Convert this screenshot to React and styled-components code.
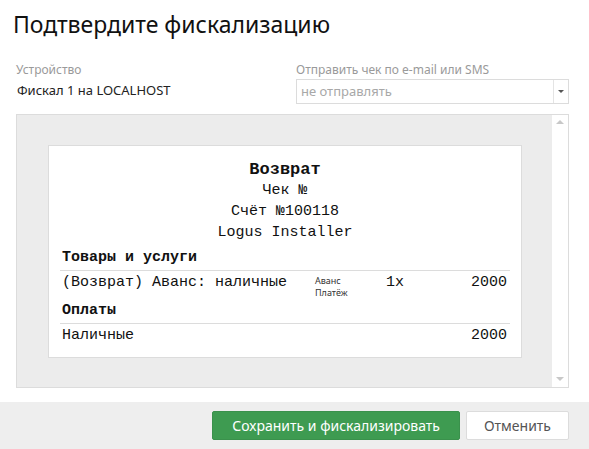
import styled, { createGlobalStyle } from 'styled-components';

const GlobalStyle = createGlobalStyle`
  html, body {
    margin: 0;
    padding: 0;
    background: #fff;
  }
  body {
    font-family: "Noto Sans", "Open Sans", sans-serif;
    color: #222;
  }
`;

const Modal = styled.div`
  width: 589px;
  height: 449px;
  display: flex;
  flex-direction: column;
  background: #fff;
  overflow: hidden;
`;

const Title = styled.h2`
  margin: 0;
  padding: 8px 13px 0;
  font-size: 23px;
  font-weight: 400;
  line-height: 32px;
  color: #111;
`;

const Body = styled.div`
  padding: 0 20px 0 16px;
`;

const Fields = styled.div`
  display: grid;
  grid-template-columns: 1fr 273px;
  margin-top: 22px;
`;

const Field = styled.div`
  display: flex;
  flex-direction: column;
`;

const Label = styled.label`
  font-size: 12px;
  line-height: 16px;
  color: #9a9a9a;
`;

const Value = styled.div`
  font-size: 13px;
  line-height: 18px;
  padding: 3px 0 0 1px;
  color: #222;
`;

const Select = styled.div`
  display: flex;
  height: 23px;
  border: 1px solid #dcdcdc;
  margin-top: 1px;
`;

const SelectText = styled.div`
  flex: 1;
  font-size: 13px;
  line-height: 23px;
  padding-left: 4px;
  color: #a8a8a8;
`;

const SelectArrow = styled.div`
  width: 14px;
  border-left: 1px solid #e4e4e4;
  display: flex;
  align-items: center;
  justify-content: center;
  &::after {
    content: '';
    border-left: 3px solid transparent;
    border-right: 3px solid transparent;
    border-top: 3px solid #555;
  }
`;

const Preview = styled.div`
  margin-top: 10px;
  height: 272px;
  border: 1px solid #dcdcdc;
  background: #ececec;
  display: flex;
`;

const PreviewInner = styled.div`
  flex: 1;
  padding: 30px 30px 30px 31px;
  overflow: hidden;
`;

const Scrollbar = styled.div`
  width: 16px;
  background: #fff;
  display: flex;
  flex-direction: column;
  justify-content: space-between;
  align-items: center;
  padding: 5px 0 6px;
`;

const ScrollArrow = styled.span`
  width: 0;
  height: 0;
  border-left: 4px solid transparent;
  border-right: 4px solid transparent;
  ${(p) =>
    p.$down
      ? 'border-top: 4px solid #c8c8c8;'
      : 'border-bottom: 4px solid #c8c8c8;'}
`;

const Receipt = styled.div`
  background: #fff;
  border: 1px solid #dcdcdc;
  padding: 13px 11px 11px;
  font-family: "Courier New", "Liberation Mono", monospace;
  font-size: 15px;
  line-height: 21px;
  color: #111;
`;

const Center = styled.div`
  text-align: center;
  font-weight: ${(p) => (p.$bold ? 700 : 400)};
  font-size: ${(p) => (p.$bold ? '17px' : '15px')};
`;

const SectionTitle = styled.div`
  font-weight: 700;
  padding: 0 2px 2px;
  border-bottom: 1px solid #dcdcdc;
  margin-top: ${(p) => p.$top || 0}px;
`;

const Row = styled.div`
  display: grid;
  grid-template-columns: 253px 71px 1fr auto;
  padding: 1px 3px 0 2px;
  min-height: ${(p) => (p.$tall ? 27 : 21)}px;
`;

const Tag = styled.div`
  font-family: "Noto Sans", "Open Sans", sans-serif;
  font-size: 9px;
  line-height: 12px;
  color: #333;
  padding-top: 3px;
`;

const Qty = styled.div``;

const Sum = styled.div`
  text-align: right;
`;

const Footer = styled.div`
  margin-top: auto;
  height: 47px;
  background: #eeeeee;
  display: flex;
  align-items: center;
  justify-content: flex-end;
  gap: 6px;
  padding-right: 20px;
`;

const Button = styled.button`
  height: 29px;
  padding: 0 ${(p) => (p.$primary ? 19 : 17)}px;
  border-radius: 2px;
  font-family: "Noto Sans", "Open Sans", sans-serif;
  font-size: 14px;
  border: 1px solid ${(p) => (p.$primary ? '#3a914c' : '#dcdcdc')};
  background: ${(p) => (p.$primary ? '#3e9b51' : '#fff')};
  color: ${(p) => (p.$primary ? '#fff' : '#555')};
  cursor: pointer;
`;

export default function App() {
  return (
    <>
      <GlobalStyle />
      <Modal>
        <Title>Подтвердите фискализацию</Title>
        <Body>
          <Fields>
            <Field>
              <Label>Устройство</Label>
              <Value>Фискал 1 на LOCALHOST</Value>
            </Field>
            <Field>
              <Label>Отправить чек по e-mail или SMS</Label>
              <Select>
                <SelectText>не отправлять</SelectText>
                <SelectArrow />
              </Select>
            </Field>
          </Fields>
          <Preview>
            <PreviewInner>
              <Receipt>
                <Center $bold>Возврат</Center>
                <Center>Чек №</Center>
                <Center>Счёт №100118</Center>
                <Center>Logus Installer</Center>
                <SectionTitle $top={4}>Товары и услуги</SectionTitle>
                <Row $tall>
                  <div>(Возврат) Аванс: наличные</div>
                  <Tag>
                    Аванс
                    <br />
                    Платёж
                  </Tag>
                  <Qty>1x</Qty>
                  <Sum>2000</Sum>
                </Row>
                <SectionTitle $top={1}>Оплаты</SectionTitle>
                <Row>
                  <div>Наличные</div>
                  <div />
                  <div />
                  <Sum>2000</Sum>
                </Row>
              </Receipt>
            </PreviewInner>
            <Scrollbar>
              <ScrollArrow />
              <ScrollArrow $down />
            </Scrollbar>
          </Preview>
        </Body>
        <Footer>
          <Button $primary>Сохранить и фискализировать</Button>
          <Button>Отменить</Button>
        </Footer>
      </Modal>
    </>
  );
}
